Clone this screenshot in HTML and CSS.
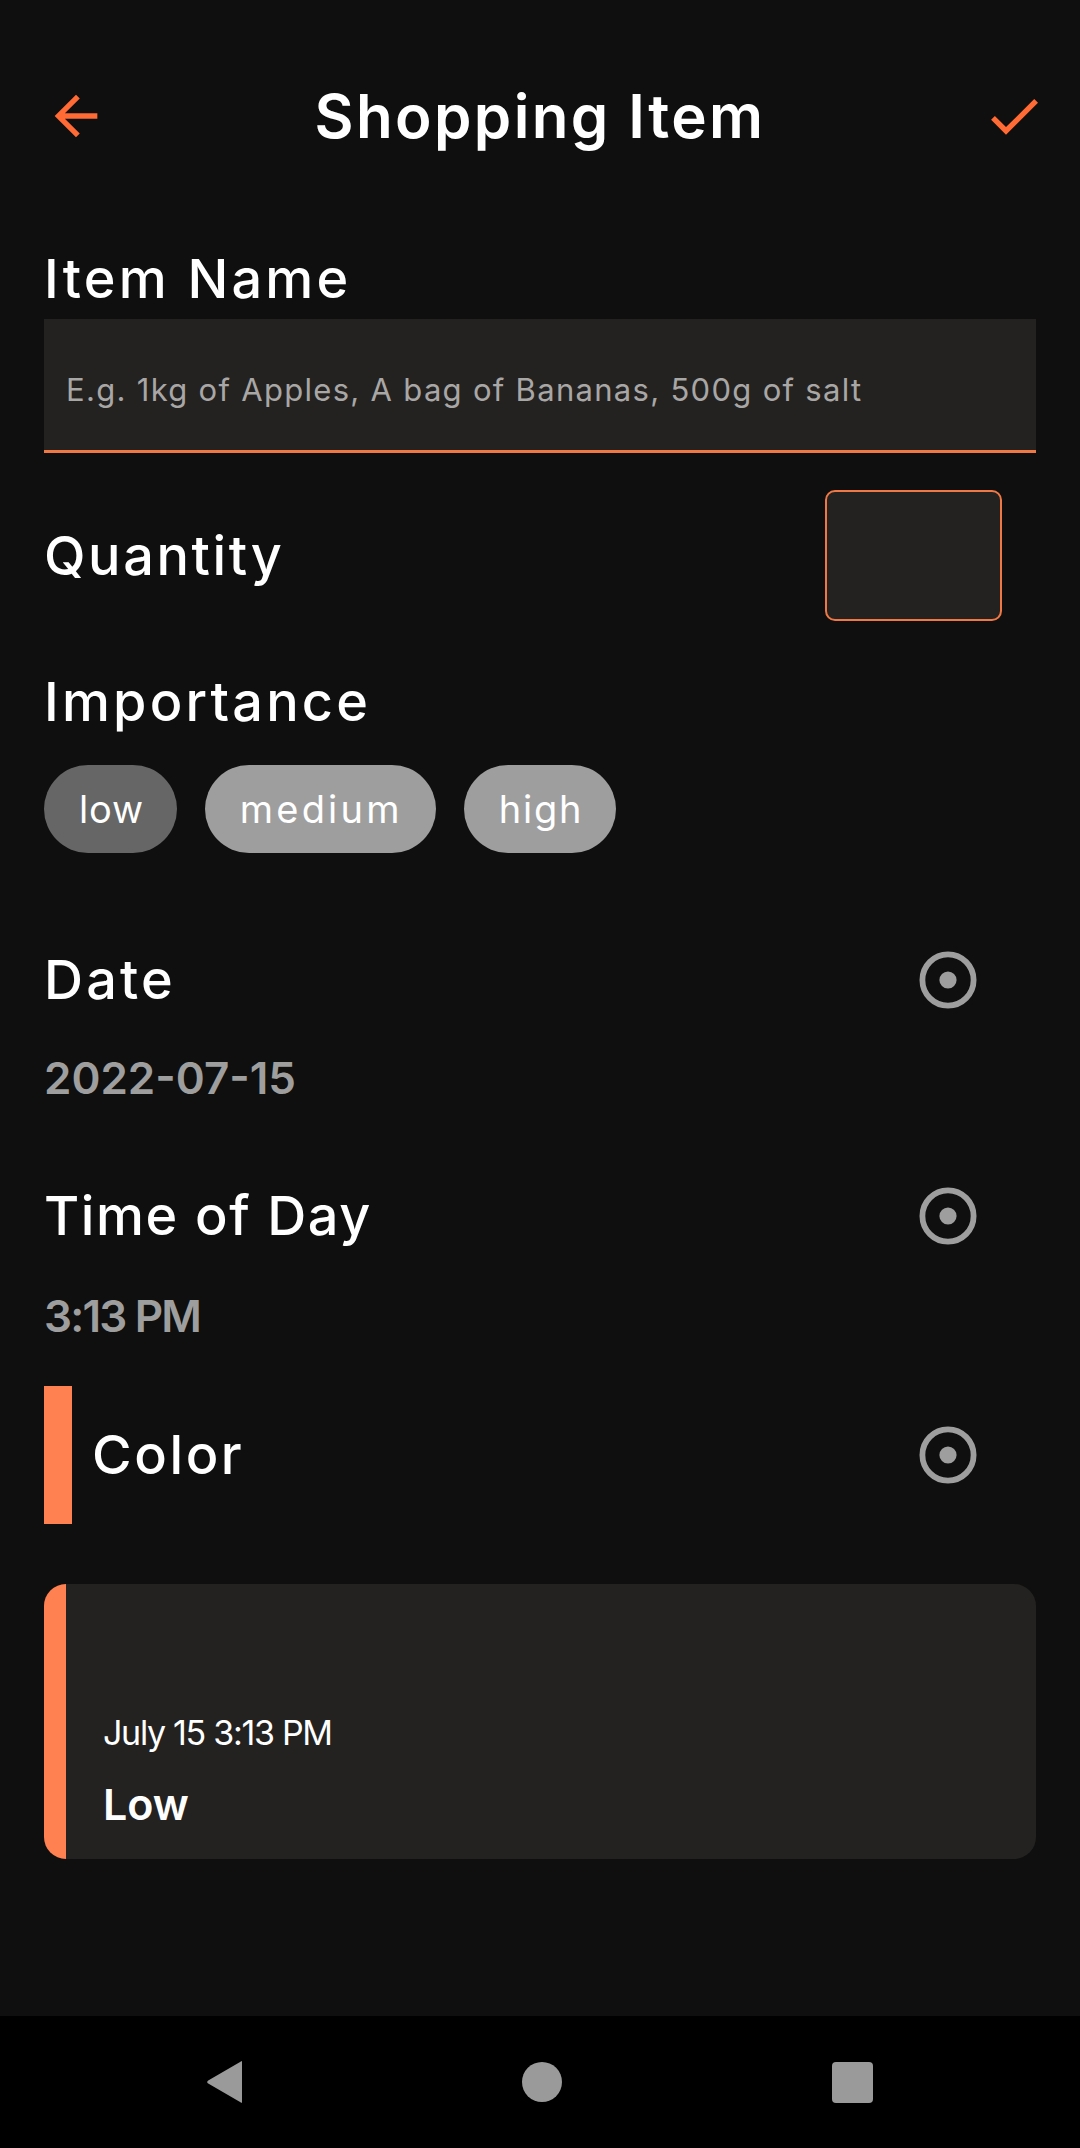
FILE: index.html
```html
<!DOCTYPE html>
<html lang="en">
<head>
<meta charset="utf-8">
<title>Shopping Item</title>
<link rel="stylesheet" href="styles.css">
</head>
<body>
<div class="screen">
  <main class="content">
    <header class="topbar">
      <svg class="icon icon-back" viewBox="0 0 24 24"><path d="M20 11H7.83l5.59-5.59L12 4l-8 8 8 8 1.41-1.41L7.83 13H20v-2z"/></svg>
      <h1 class="title">Shopping Item</h1>
      <svg class="icon icon-check" viewBox="0 0 24 24"><path d="M9 16.17L4.83 12l-1.42 1.41L9 19 21 7l-1.41-1.41z"/></svg>
    </header>

    <div class="label label-item">Item Name</div>
    <div class="textfield"><span class="placeholder">E.g. 1kg of Apples, A bag of Bananas, 500g of salt</span></div>

    <div class="row row-qty">
      <div class="label label-qty">Quantity</div>
      <div class="qty-box"></div>
    </div>

    <div class="label label-importance">Importance</div>
    <div class="chips">
      <span class="chip chip-selected">low</span>
      <span class="chip chip-medium">medium</span>
      <span class="chip chip-high">high</span>
    </div>

    <div class="row row-picker row-date">
      <div class="label">Date</div>
      <svg class="radio" viewBox="0 0 64 64"><circle cx="32" cy="32" r="25.6" fill="none" stroke="#9e9e9e" stroke-width="5.8"/><circle cx="32" cy="32" r="8.6" fill="#9e9e9e"/></svg>
    </div>
    <div class="value">2022-07-15</div>

    <div class="row row-picker row-time">
      <div class="label label-time">Time of Day</div>
      <svg class="radio" viewBox="0 0 64 64"><circle cx="32" cy="32" r="25.6" fill="none" stroke="#9e9e9e" stroke-width="5.8"/><circle cx="32" cy="32" r="8.6" fill="#9e9e9e"/></svg>
    </div>
    <div class="value value-time">3:13 PM</div>

    <div class="row row-color">
      <div class="color-bar"></div>
      <div class="label label-color">Color</div>
      <svg class="radio" viewBox="0 0 64 64"><circle cx="32" cy="32" r="25.6" fill="none" stroke="#9e9e9e" stroke-width="5.8"/><circle cx="32" cy="32" r="8.6" fill="#9e9e9e"/></svg>
    </div>

    <div class="card">
      <div class="card-strip"></div>
      <div class="card-body">
        <div class="card-date">July 15 3:13 PM</div>
        <div class="card-title">Low</div>
      </div>
    </div>
  </main>

  <nav class="navbar">
    <svg class="nav-icon" viewBox="0 0 44 44"><path d="M37 2.5 L37 41.5 Q37 44 35.5 42.2 L3.2 23.6 Q1.2 22 3.2 20.4 L35.5 1.8 Q37 0 37 2.5 Z" fill="#9a9a9a"/></svg>
    <span class="nav-home"></span>
    <span class="nav-recent"></span>
  </nav>
</div>
</body>
</html>
```

FILE: styles.css
```css
* { box-sizing: border-box; }

html, body {
  margin: 0;
  padding: 0;
  background: #0f0f0f;
}

body {
  font-family: "Inter", "Noto Sans", sans-serif;
  color: #ffffff;
}

.screen {
  width: 1080px;
  min-height: 2148px;
  display: flex;
  flex-direction: column;
}

.content {
  flex: 1;
  padding: 0 44px;
}

/* header */
.topbar {
  margin: 84px -10px 0 0;
  height: 64px;
  display: grid;
  grid-template-columns: 1fr auto 1fr;
  align-items: center;
}

.icon {
  width: 64px;
  height: 64px;
  fill: #ff6a35;
  display: block;
}

.icon-check { justify-self: end; }

.title {
  margin: 0;
  font-size: 60px;
  line-height: 64px;
  font-weight: 600;
  letter-spacing: 2.4px;
  position: relative;
  left: -5px;
}

/* labels */
.label {
  font-size: 54px;
  line-height: 52px;
  font-weight: 500;
  letter-spacing: 3.2px;
  color: #ffffff;
}

.label-qty { letter-spacing: 2.6px; }
.label-time { letter-spacing: 1.6px; }

.label-item { margin-top: 105px; }

.textfield {
  margin-top: 14px;
  background: #232221;
  border-bottom: 3px solid #f07845;
  padding: 56px 22px 45px;
}

.placeholder {
  display: block;
  font-size: 31px;
  line-height: 30px;
  color: #a9a7a5;
  letter-spacing: 1.3px;
}

.row {
  display: flex;
  align-items: center;
  justify-content: space-between;
}

.row-qty { margin-top: 37px; }

.qty-box {
  width: 177px;
  height: 131px;
  margin-right: 34px;
  background: #232221;
  border: 2.5px solid #f07845;
  border-radius: 10px;
}

.label-importance { margin-top: 55px; }

.chips {
  margin-top: 37px;
  display: flex;
  gap: 28px;
}

.chip {
  height: 88px;
  line-height: 88px;
  padding: 0 33px 0 35px;
  border-radius: 44px;
  background: #9e9e9e;
  font-size: 38px;
  letter-spacing: 2.6px;
  color: #ffffff;
}

.chip-selected { background: #666666; letter-spacing: 0.8px; }
.chip-medium { letter-spacing: 3.2px; }
.chip-high { letter-spacing: 1.8px; }

.row-picker { height: 64px; }

.row-date { margin-top: 95px; }
.row-time { margin-top: 84px; }

.radio {
  width: 64px;
  height: 64px;
  margin-right: 56px;
  display: block;
}

.value {
  margin-top: 44px;
  font-size: 44px;
  line-height: 44px;
  font-weight: 600;
  color: #9e9e9e;
}

.value-time {
  margin-top: 46px;
  letter-spacing: -1.8px;
}

.row-color {
  margin-top: 48px;
  height: 138px;
}

.color-bar {
  width: 28px;
  height: 138px;
  background: #ff8050;
}

.label-color {
  flex: 1;
  margin-left: 20px;
  letter-spacing: 2.6px;
}

/* preview card */
.card {
  margin-top: 60px;
  height: 275px;
  display: flex;
  border-radius: 22px;
  overflow: hidden;
  background: #232221;
}

.card-strip {
  width: 22px;
  background: #ff8050;
}

.card-body {
  padding: 132px 0 0 37px;
}

.card-date {
  font-size: 34px;
  line-height: 34px;
  letter-spacing: -1.3px;
  color: #ffffff;
}

.card-title {
  margin-top: 33px;
  font-size: 43px;
  line-height: 43px;
  font-weight: 600;
}

/* system nav */
.navbar {
  height: 132px;
  background: #000000;
  display: flex;
  align-items: center;
  justify-content: center;
  gap: 268px;
  padding-right: 3px;
}

.nav-icon {
  width: 44px;
  height: 44px;
  display: block;
  margin-right: 3px;
}

.nav-home {
  width: 40px;
  height: 40px;
  margin: 0 2px;
  border-radius: 50%;
  background: #9a9a9a;
}

.nav-recent {
  width: 41px;
  height: 41px;
  border-radius: 4px;
  background: #9a9a9a;
}
```
